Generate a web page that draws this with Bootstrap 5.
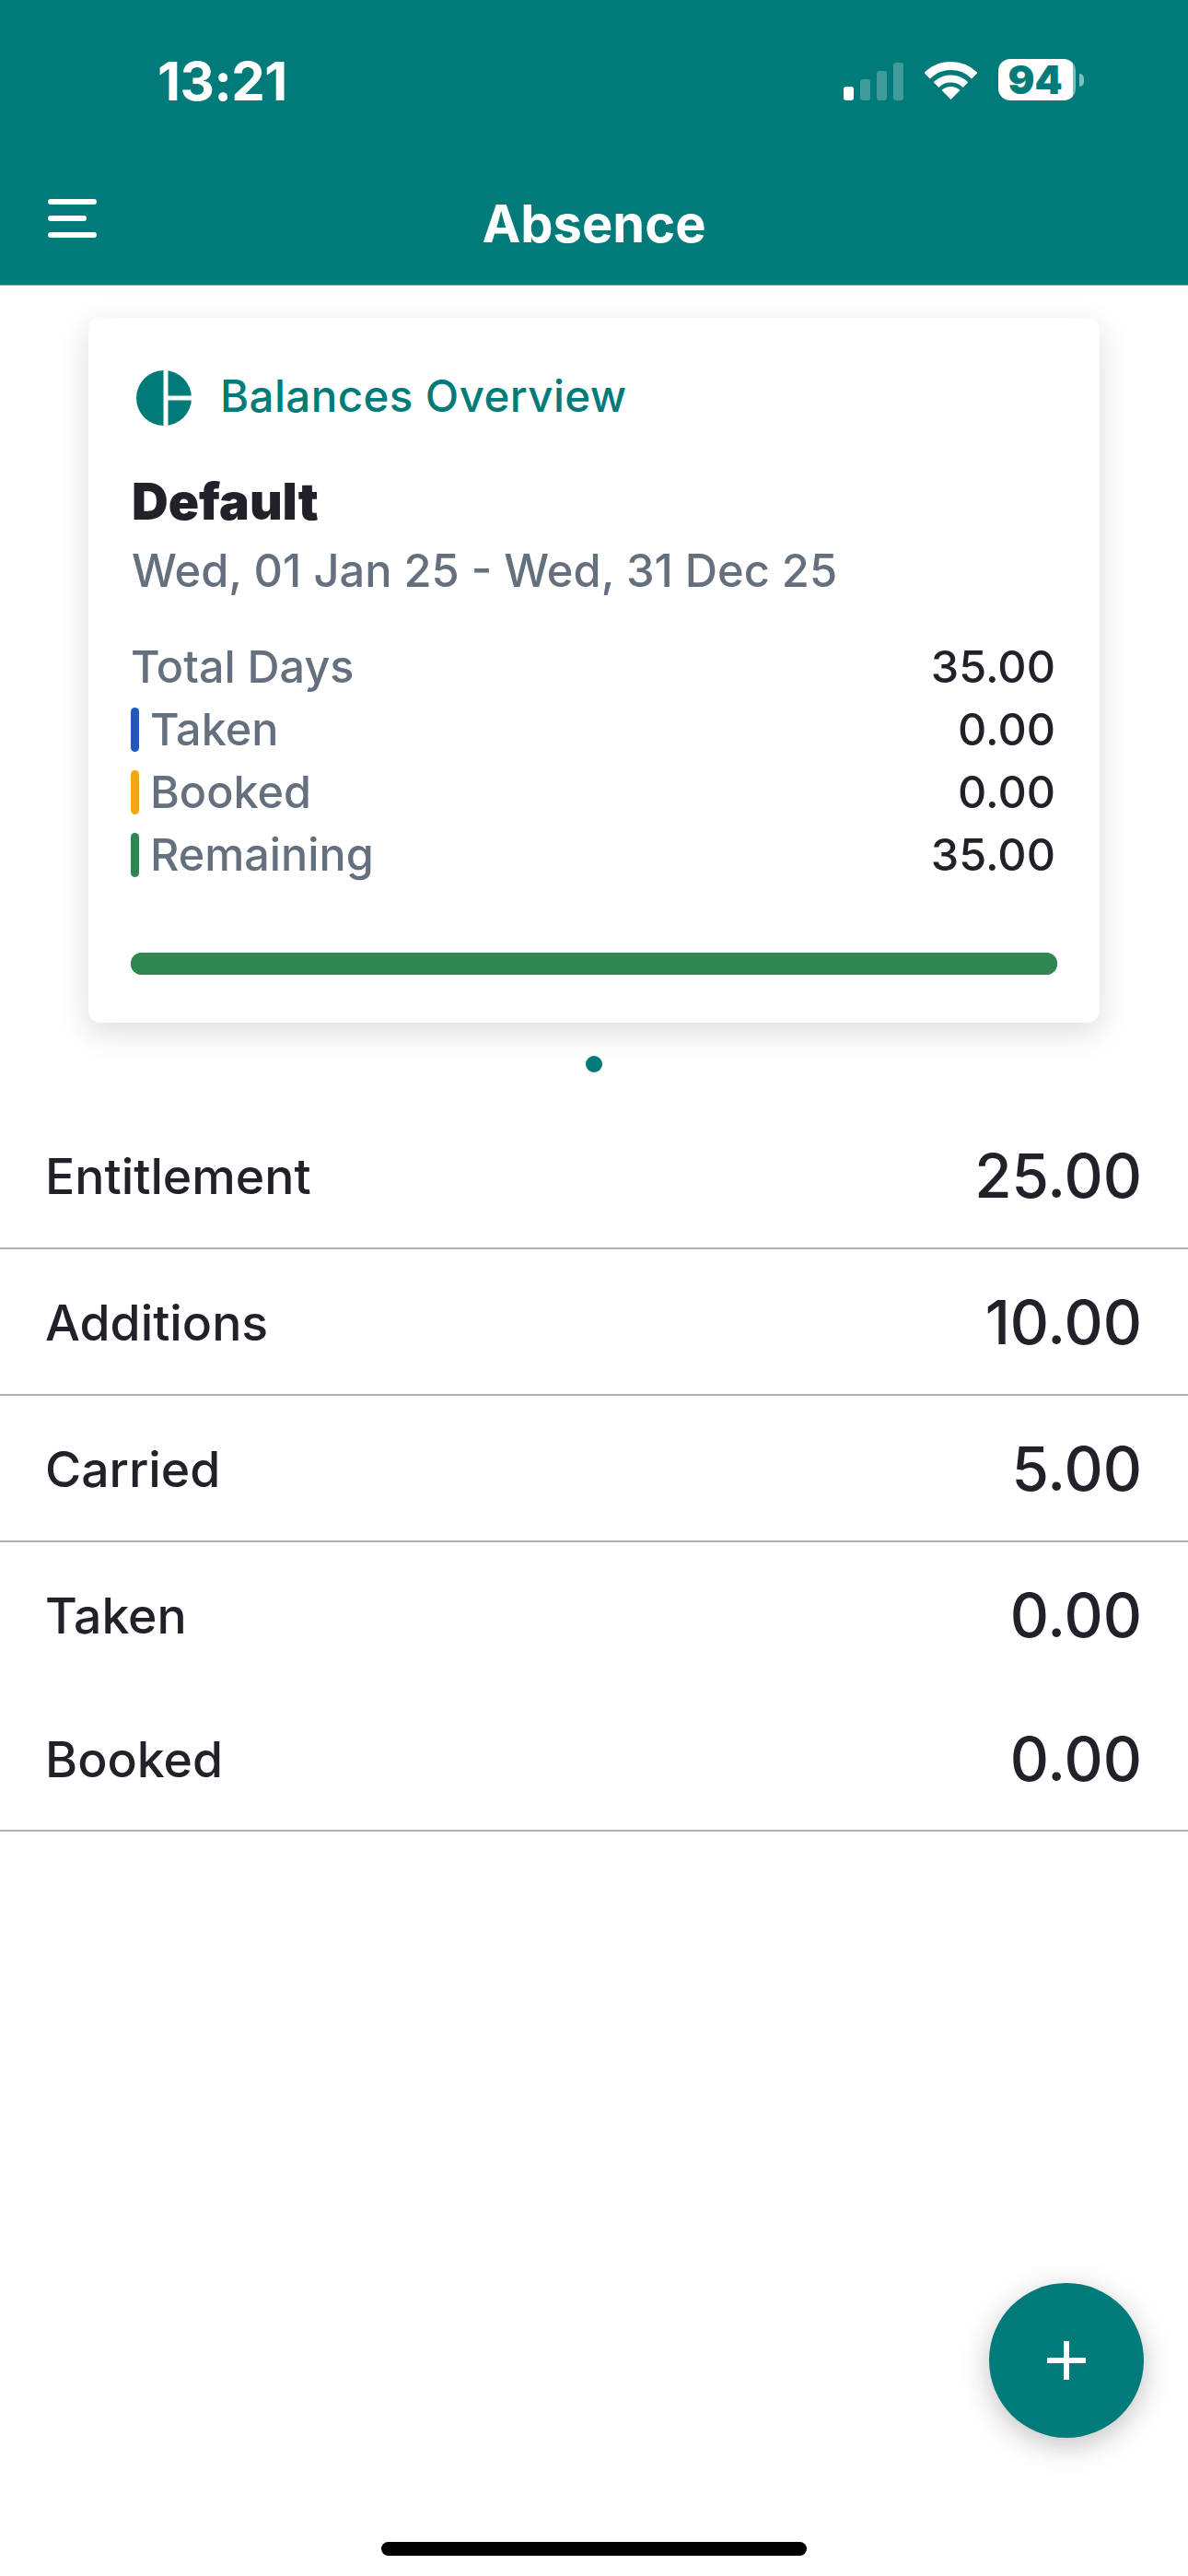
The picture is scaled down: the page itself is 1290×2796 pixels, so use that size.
<!DOCTYPE html>
<html lang="en">
<head>
    <meta charset="UTF-8">
    <meta name="viewport" content="width=device-width, initial-scale=1.0">
    <title>Absence</title>
    <link href="https://cdn.jsdelivr.net/npm/bootstrap@5.3.2/dist/css/bootstrap.min.css" rel="stylesheet">
    <style>
        :root { --teal: #007b79; --ink: #212229; --slate: #64707d; }
        html, body { height: 100%; }
        body { font-family: Inter, "Liberation Sans", sans-serif; color: var(--ink); background: #fff; }
        .app-shell { width: 1290px; height: 2796px; position: relative; overflow: hidden; }

        /* header: status bar + title bar */
        .app-head { background: var(--teal); color: #fff; height: 310px; border-bottom: 1px solid #8fa9a8; }
        .status-row { height: 190px; padding: 64px 113px 0 171px; }
        .clock { font-size: 58px; line-height: 48px; font-weight: 700; letter-spacing: -.5px; }
        .signal { gap: 7px; height: 41px; }
        .signal i { width: 11px; border-radius: 3px; background: rgba(255, 255, 255, .25); }
        .signal i:first-child { background: #fff; }
        .signal i:nth-child(1) { height: 15px; }
        .signal i:nth-child(2) { height: 23px; }
        .signal i:nth-child(3) { height: 32px; }
        .signal i:nth-child(4) { height: 41px; }
        .wifi { width: 57px; height: 42px; margin: 0 23px 0 23px; }
        .battery { width: 84px; height: 45px; border-radius: 13px; font-size: 43px; line-height: 45px; font-weight: 900; color: var(--teal);
                   background: linear-gradient(90deg, #fff 96%, rgba(255, 255, 255, .5) 96%); text-align: center; padding-right: 4px; }
        .battery-nub { width: 5px; height: 14px; margin-left: 4px; border-radius: 0 7px 7px 0; background: rgba(255, 255, 255, .5); }
        .title-row { height: 119px; padding: 0; position: relative; }
        .title-row .navbar-brand { font-size: 56px; font-weight: 700; color: #fff; line-height: 1; margin: 0 auto; padding: 0 0 14px; }
        .burger { position: absolute; left: 52px; top: 26px; width: 53px; height: 42px; background: none; border: 0; padding: 0; }
        .burger span { height: 6px; border-radius: 3px; background: #fff; width: 100%; }
        .burger span:nth-child(2) { width: 42px; }

        /* overview card */
        .overview { margin: 35px 96px 0; height: 765px; border: 0; border-radius: 13px; box-shadow: 0 10px 32px rgba(33, 37, 41, .16); }
        .overview .card-body { padding: 57px 46px 0; }
        .card-head { height: 60px; color: var(--teal); font-size: 47.5px; line-height: 60px; font-weight: 500; letter-spacing: .4px; gap: 31px; padding-left: 6px; }
        .card-head span { padding-bottom: 4px; }
        .chart-ic { width: 60px; height: 60px; }
        .plan-name { font-size: 55px; line-height: 60px; font-weight: 900; margin: 52px 0 0 1px; }
        .plan-dates { font-size: 48.8px; line-height: 60px; font-weight: 500; color: var(--slate); margin: 16px 0 0 1px; }
        .stats { margin-top: 40px; font-size: 48.5px; line-height: 68px; font-weight: 500; color: var(--slate); }
        .stats b { font-size: 48.5px; font-weight: 550; color: var(--ink); margin-right: 2px; }
        .stats .tick { width: 9px; height: 48px; border-radius: 5px; margin-right: 12px; }
        .overview .progress { height: 24px; margin-top: 72px; border-radius: 12px; background: #2e8750; }
        .overview .progress-bar { background: #2e8750; }
        .pager { height: 18px; width: 18px; border-radius: 50%; background: var(--teal); margin: 36px auto 0; }

        /* totals list */
        .totals { margin-top: 33px; border-radius: 0; }
        .totals .list-group-item { height: 159px; padding: 3px 50px 0 49px; border-bottom: 2px solid #aeb0b2; font-size: 53.5px; font-weight: 550; color: var(--ink); }
        .totals .list-group-item.short { height: 157px; }
        .totals .sum { font-size: 65.5px; }
        .totals .list-group-item.last { border-bottom: 2px solid #aeb0b2; }

        .fab { position: absolute; left: 1074px; top: 2478px; width: 168px; height: 168px; border: 0; padding: 0; background: var(--teal);
               box-shadow: 0 8px 30px rgba(33, 37, 41, .28); }
        .home-bar { position: absolute; left: 414px; top: 2759px; width: 462px; height: 15px; border-radius: 8px; background: #000; }
    </style>
</head>
<body>
    <div class="app-shell">
        <header class="app-head">
            <div class="status-row d-flex justify-content-between align-items-start">
                <div class="clock">13:21</div>
                <div class="d-flex align-items-end">
                    <div class="signal d-flex align-items-end">
                        <i></i><i></i><i></i><i></i>
                    </div>
                    <svg class="wifi" viewBox="0 0 57 42" fill="none" stroke="#fff">
                        <path d="M2.7 15.2A36.5 36.5 0 0 1 54.3 15.2" stroke-width="9"/>
                        <path d="M12.6 25.1A22.5 22.5 0 0 1 44.4 25.1" stroke-width="8"/>
                        <path d="M18.6 31.1A14 14 0 0 1 38.4 31.1L28.5 41Z" fill="#fff" stroke="none"/>
                    </svg>
                    <div class="d-flex align-items-center">
                        <div class="battery">94</div>
                        <div class="battery-nub"></div>
                    </div>
                </div>
            </div>
            <nav class="navbar title-row">
                <button class="burger d-flex flex-column justify-content-between" type="button" aria-label="Menu">
                    <span></span><span></span><span></span>
                </button>
                <span class="navbar-brand">Absence</span>
            </nav>
        </header>

        <div class="card overview">
            <div class="card-body">
                <div class="card-head d-flex align-items-center">
                    <svg class="chart-ic" viewBox="0 0 60 60">
                        <!-- pie split in three by two white slots -->
                        <circle cx="30" cy="30" r="30" fill="#007b79"/>
                        <path d="M32 0V60M32 30H60" stroke="#fff" stroke-width="5" fill="none"/>
                    </svg>
                    <span>Balances Overview</span>
                </div>
                <div class="plan-name">Default</div>
                <div class="plan-dates">Wed, 01 Jan 25 - Wed, 31 Dec 25</div>
                <div class="stats">
                    <div class="d-flex justify-content-between"><span>Total Days</span><b>35.00</b></div>
                    <div class="d-flex justify-content-between align-items-center">
                        <span class="d-flex align-items-center"><span class="tick" style="background:#2357bb"></span>Taken</span><b>0.00</b>
                    </div>
                    <div class="d-flex justify-content-between align-items-center">
                        <span class="d-flex align-items-center"><span class="tick" style="background:#f2a60f"></span>Booked</span><b>0.00</b>
                    </div>
                    <div class="d-flex justify-content-between align-items-center">
                        <span class="d-flex align-items-center"><span class="tick" style="background:#2e8750"></span>Remaining</span><b>35.00</b>
                    </div>
                </div>
                <div class="progress">
                    <div class="progress-bar" style="width: 100%"></div>
                </div>
            </div>
        </div>
        <div class="pager"></div>

        <ul class="list-group list-group-flush totals">
            <li class="list-group-item d-flex justify-content-between align-items-center"><span>Entitlement</span><span class="sum">25.00</span></li>
            <li class="list-group-item d-flex justify-content-between align-items-center"><span>Additions</span><span class="sum">10.00</span></li>
            <li class="list-group-item d-flex justify-content-between align-items-center"><span>Carried</span><span class="sum">5.00</span></li>
            <li class="list-group-item short border-0 d-flex justify-content-between align-items-center"><span>Taken</span><span class="sum">0.00</span></li>
            <li class="list-group-item short last d-flex justify-content-between align-items-center"><span>Booked</span><span class="sum">0.00</span></li>
        </ul>

        <button class="fab btn rounded-circle d-flex align-items-center justify-content-center" type="button" aria-label="Add">
            <svg width="42" height="42" viewBox="0 0 42 42"><path d="M21 0V42M0 21H42" stroke="#fff" stroke-width="6"/></svg>
        </button>
        <div class="home-bar"></div>
    </div>
    <script src="https://cdn.jsdelivr.net/npm/bootstrap@5.3.2/dist/js/bootstrap.bundle.min.js"></script>
</body>
</html>
